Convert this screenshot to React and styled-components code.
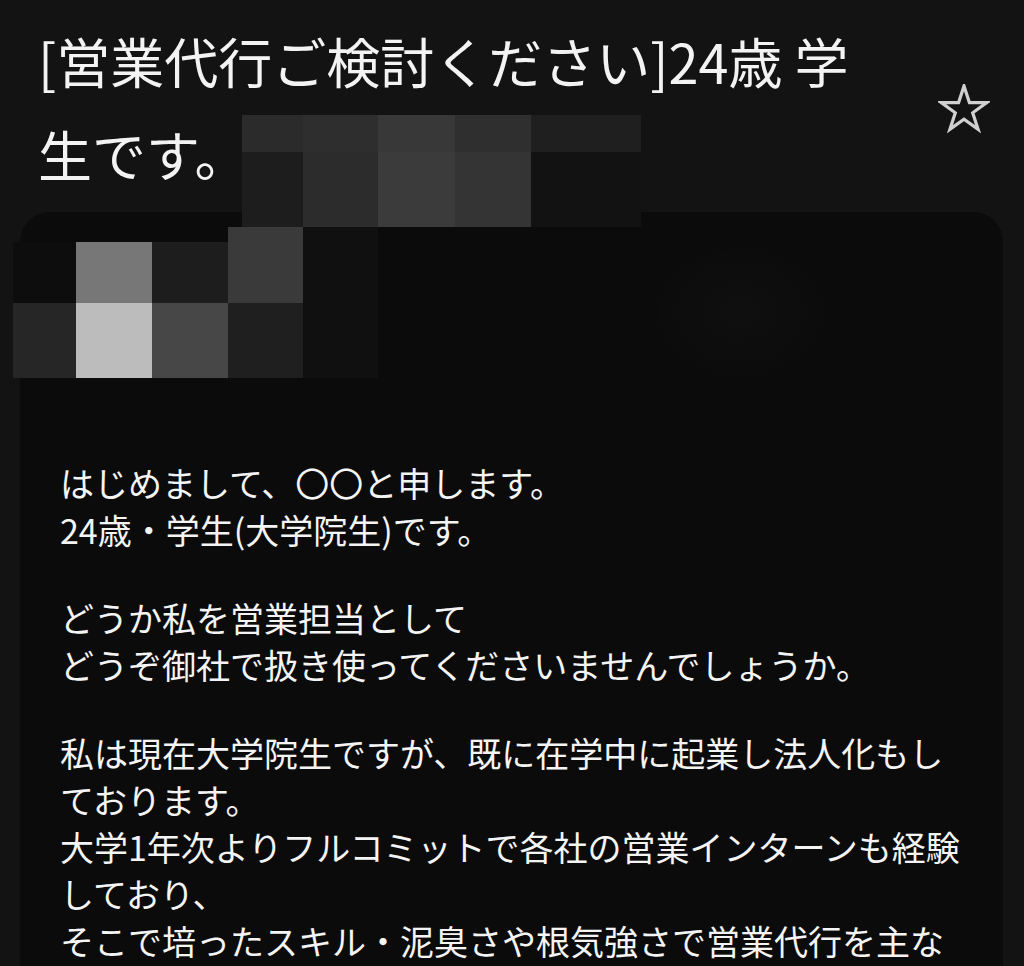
import React from "react";
import styled, { createGlobalStyle } from "styled-components";

const GlobalStyle = createGlobalStyle`
  html, body { margin: 0; padding: 0; background: #131313; }
  body { font-family: "Noto Sans CJK JP", "Noto Sans", sans-serif; }
  * { box-sizing: border-box; }
`;

const Page = styled.div`
  position: relative;
  height: 966px;
  overflow: hidden;
  background: #131313;
`;

const Header = styled.header`
  display: flex;
  align-items: flex-start;
  padding: 14px 34px 0 38px;
`;

const Title = styled.h1`
  flex: none;
  width: 840px;
  margin: 0;
  font-size: 54px;
  line-height: 93px;
  font-weight: 400;
  color: #f3f3f3;
`;

const StarButton = styled.button`
  margin: 70px 0 0 auto;
  padding: 0;
  border: 0;
  background: none;
  width: 52px;
  height: 50px;
  display: flex;
  cursor: pointer;
`;

const Card = styled.section`
  margin: 12px 21px 0 20px;
  border-radius: 30px 30px 0 0;
  background: #0b0b0b;
  padding: 0 33px 0 40px;
  min-height: 760px;
`;

const SenderHeader = styled.div`
  height: 247px;
  background: radial-gradient(ellipse 90px 70px at 680px 100px, rgba(255, 255, 255, 0.018), rgba(255, 255, 255, 0) 100%);
`;

const Body = styled.div`
  width: 910px;
  color: #f4f4f4;
  font-size: 34px;
  line-height: 47px;
`;

const Para = styled.p`
  margin: 0;
  & + & { margin-top: 41px; }
`;

const Mosaic = styled.div`
  position: absolute;
  left: 13px;
  top: 115px;
  display: grid;
  grid-template-columns: 63px 76px 76px 14px 61px 75px 77px 76px 110px;
  grid-template-rows: 37px 75px 15px 61px 75px;
  pointer-events: none;
`;

const Cell = styled.div`
  grid-column: ${(p) => p.$col};
  grid-row: ${(p) => p.$row};
  background: ${(p) => p.$c};
`;

const cells = [
  ["5/6", "1/2", "#2b2b2b"],
  ["6/7", "1/2", "#2e2e2e"],
  ["7/8", "1/2", "#383838"],
  ["8/9", "1/2", "#2f2f2f"],
  ["9/10", "1/2", "#1f1f1f"],
  ["5/6", "2/3", "#1d1d1d"],
  ["6/7", "2/3", "#2c2c2c"],
  ["7/8", "2/3", "#3b3b3b"],
  ["8/9", "2/3", "#343434"],
  ["9/10", "2/3", "#121212"],
  ["4/6", "3/5", "#3a3a3a"],
  ["6/7", "3/6", "#101010"],
  ["1/2", "4/5", "#0d0d0d"],
  ["2/3", "4/5", "#777777"],
  ["3/4", "4/5", "#1d1d1d"],
  ["1/2", "5/6", "#262626"],
  ["2/3", "5/6", "#bcbcbc"],
  ["3/4", "5/6", "#474747"],
  ["4/6", "5/6", "#1f1f1f"],
];

const StarIcon = () => (
  <svg width="52" height="50" viewBox="0 0 52 50" aria-hidden="true">
    <polygon
      points="26,2 31.4,18.6 48.8,18.6 34.7,28.8 40.1,45.4 26,35.2 11.9,45.4 17.3,28.8 3.2,18.6 20.6,18.6"
      fill="none"
      stroke="#d0d0d0"
      strokeWidth="3.2"
      strokeLinejoin="miter"
    />
  </svg>
);

export default function App() {
  return (
    <>
      <GlobalStyle />
      <Page>
        <Header>
          <Title>[営業代行ご検討ください]24歳 学生です。</Title>
          <StarButton aria-label="スター">
            <StarIcon />
          </StarButton>
        </Header>
        <Card>
          <SenderHeader />
          <Body>
            <Para>
              はじめまして、〇〇と申します。
              <br />
              24歳・学生(大学院生)です。
            </Para>
            <Para>
              どうか私を営業担当として
              <br />
              どうぞ御社で扱き使ってくださいませんでしょうか。
            </Para>
            <Para>
              私は現在大学院生ですが、既に在学中に起業し法人化もしております。
              <br />
              大学1年次よりフルコミットで各社の営業インターンも経験しており、
              <br />
              そこで培ったスキル・泥臭さや根気強さで営業代行を主な事業としております。
            </Para>
          </Body>
        </Card>
        <Mosaic>
          {cells.map(([col, row, c], i) => (
            <Cell key={i} $col={col} $row={row} $c={c} />
          ))}
        </Mosaic>
      </Page>
    </>
  );
}
